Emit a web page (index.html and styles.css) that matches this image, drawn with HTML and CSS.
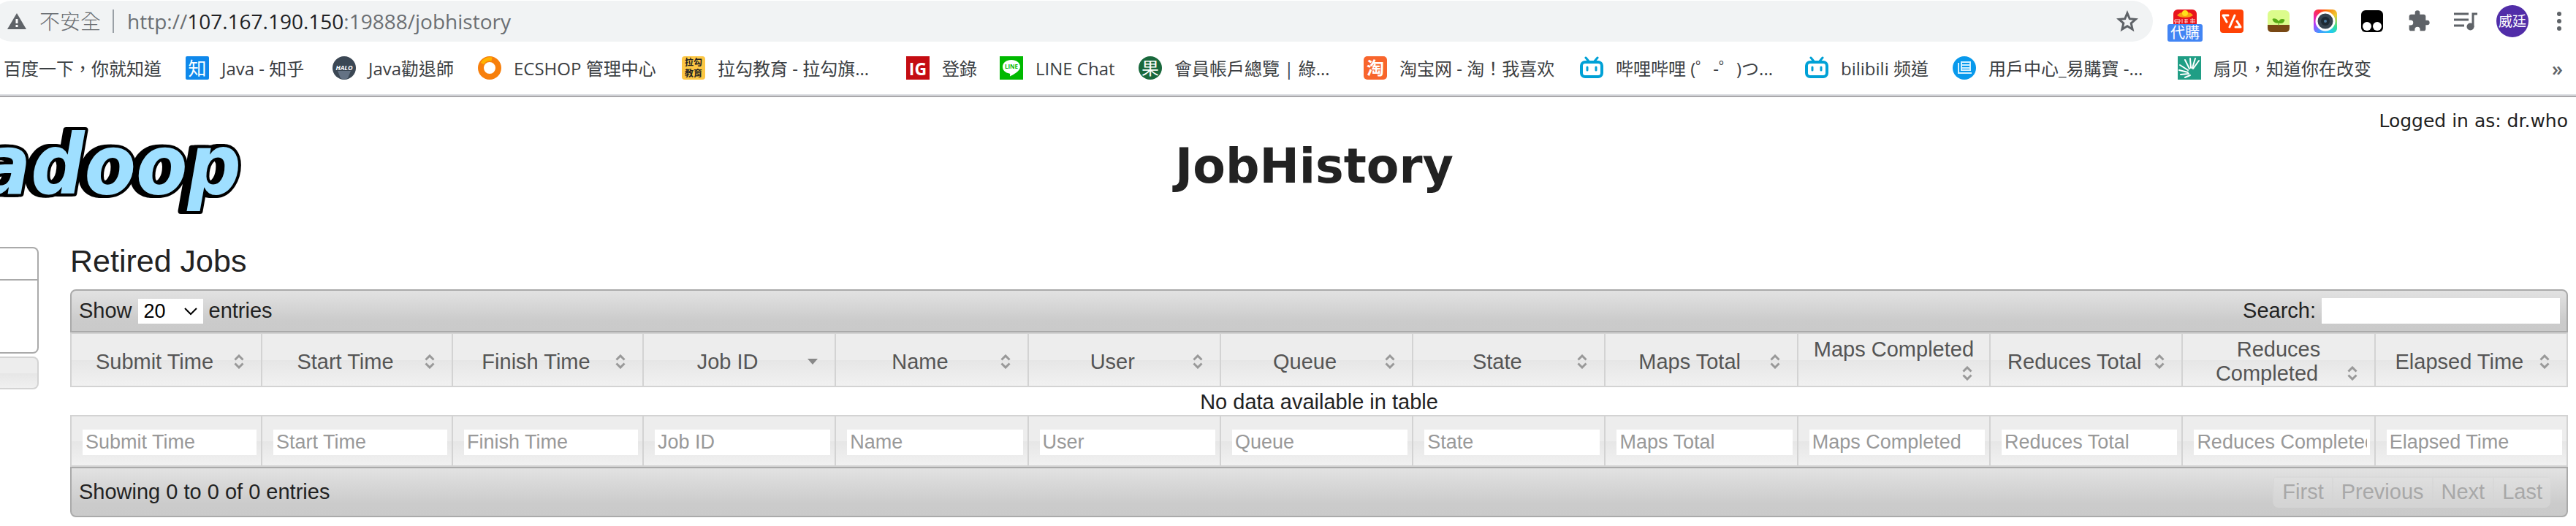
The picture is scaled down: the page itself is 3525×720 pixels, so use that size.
FILE: index.html
```html
<!DOCTYPE html>
<html lang="zh-Hant">
<head>
<meta charset="utf-8">
<title>JobHistory</title>
<link rel="stylesheet" href="styles.css">
</head>
<body>
<svg class="defs" aria-hidden="true">
  <symbol id="sort-both" viewBox="0 0 14 20"><path d="M1.500 7.500L7 2l5.500 5.500M1.500 12.500L7 18l5.500-5.500" fill="none" stroke="#999" stroke-width="3"/></symbol>
  <symbol id="sort-down" viewBox="0 0 14 20"><path d="M0 6h14L7 14z" fill="#888"/></symbol>
  <symbol id="bili" viewBox="0 0 32 32"><path d="M8 2l5 6M24 2l-5 6" stroke="#00a1d6" stroke-width="3" stroke-linecap="round"/><rect x="2" y="8" width="28" height="20" rx="5" fill="#fff" stroke="#00a1d6" stroke-width="4"/><path d="M10 15v4M22 15v4" stroke="#00a1d6" stroke-width="3" stroke-linecap="round"/></symbol>
</svg>

<header class="browser">
  <div class="toolbar">
    <div class="omnibox">
      <svg class="warn" viewBox="0 0 26 22"><path d="M13 0l13 22H0z" fill="#5f6368"/><path d="M13 8v6M13 16v3" stroke="#fff" stroke-width="3"/></svg>
      <span class="unsafe">不安全</span>
      <span class="sep"></span>
      <span class="url">http://<b>107.167.190.150</b>:19888/jobhistory</span>
      <button class="star" aria-label="Bookmark"><svg viewBox="0 0 30 30"><path d="M15 4l3.200 7.700 8.300.7-6.300 5.500 1.900 8.100-7.100-4.300L7.900 26l1.900-8.100-6.300-5.500 8.300-.7z" fill="none" stroke="#5f6368" stroke-width="3"/></svg></button>
    </div>
    <div class="extensions">
      <button class="ext gift" aria-label="代購">
        <svg viewBox="0 0 32 32"><rect width="32" height="32" rx="6" fill="#e8141c"/><path d="M5 8q4-4 7-4 4-4 8 0 4 0 7 4-4 3-11 3T5 8z" fill="#f8a012"/><circle cx="16" cy="5" r="4" fill="#ffe11a"/><path d="M2 14h7v3H2zM3 17v3M8 17v3M12 13v6M15 14h5M15 17h5M17 13v6M23 14h7M26 12v7M23 17h7" fill="none" stroke="#ffdcdc"/></svg>
        <span class="badge">代購</span>
      </button>
      <button class="ext" aria-label="Code"><svg viewBox="0 0 32 32"><rect width="32" height="32" rx="4" fill="#ff4206"/><path d="M11 8H4l5 9M20 8l-7 16M21 24h7l-5-8" fill="none" stroke="#fff" stroke-width="3" stroke-linejoin="round" stroke-linecap="round"/></svg></button>
      <button class="ext" aria-label="Plant"><svg viewBox="0 0 32 32"><rect x="1" y="1" width="30" height="30" rx="6" fill="#dcfc8c"/><path d="M1 21h30v4q0 6-6 6H7q-6 0-6-6z" fill="#784814"/><path d="M16 22v-6M16 18q-7 1-8-5 7-1 8 5q1-6 8-4-1 6-8 4" fill="#58ac14" stroke="#58ac14"/></svg></button>
      <button class="ext" aria-label="Camera"><span class="camera"><svg viewBox="0 0 32 32"><circle cx="16" cy="16" r="12" fill="#35434f" stroke="#fff" stroke-width="3"/><circle cx="16" cy="16" r="6" fill="#1d2933"/><circle cx="16" cy="16" r="2" fill="#4c7aa0"/></svg></span></button>
      <button class="ext" aria-label="Scripts"><svg viewBox="0 0 32 32"><rect x="1" y="1" width="30" height="30" rx="6" fill="#000"/><circle cx="9" cy="23" r="6" fill="#fff"/><circle cx="23" cy="23" r="6" fill="#fff"/></svg></button>
      <button class="ext" aria-label="Extensions"><svg viewBox="0 0 24 24"><path fill="#5f6368" d="M20.500 11H19V7c0-1.100-.9-2-2-2h-4V3.500a2.500 2.500 0 0 0-5 0V5H4c-1.100 0-2 .9-2 2v3.800h1.500a2.700 2.700 0 0 1 0 5.400H2V20c0 1.100.9 2 2 2h3.800v-1.500a2.700 2.700 0 0 1 5.400 0V22H17c1.100 0 2-.9 2-2v-4h1.500a2.500 2.500 0 0 0 0-5z"/></svg></button>
      <button class="ext" aria-label="Media"><svg viewBox="0 0 32 32"><path d="M0 6h20M0 14h20M0 22h14" stroke="#5f6368" stroke-width="3"/><path d="M32 6h-6v18" fill="none" stroke="#5f6368" stroke-width="3"/><circle cx="22.500" cy="23.500" r="5" fill="#5f6368"/></svg></button>
      <button class="avatar">威廷</button>
      <button class="ext dots" aria-label="Menu"><svg viewBox="0 0 32 32"><g fill="#5f6368"><circle cx="16" cy="6" r="3"/><circle cx="16" cy="16" r="3"/><circle cx="16" cy="26" r="3"/></g></svg></button>
    </div>
  </div>

  <nav class="bookmarks">
    <a href="#">百度一下，你就知道</a>
    <a href="#"><span class="fav zhihu">知</span>Java - 知乎</a>
    <a href="#"><svg class="fav" viewBox="0 0 32 32"><circle cx="16" cy="16" r="16" fill="#3b4754"/><path d="M7 20h18l-4 10q-5 3-10 0z" fill="#647284"/><text x="16" y="19" class="halo">HALO</text></svg>Java勸退師</a>
    <a href="#"><svg class="fav" viewBox="0 0 32 32"><circle cx="16" cy="16" r="12" fill="none" stroke="#f77f0c" stroke-width="8"/><path d="M6 10a12 12 0 0 1 13-6" fill="none" stroke="#ffb400" stroke-width="5"/></svg>ECSHOP 管理中心</a>
    <a href="#"><span class="fav lagou">拉勾教育</span>拉勾教育 - 拉勾旗...</a>
    <a href="#"><span class="fav ig">IG</span>登錄</a>
    <a href="#"><svg class="fav" viewBox="0 0 32 32"><rect width="32" height="32" fill="#00b900"/><path d="M16 5c-7 0-12 4-12 9.500 0 5 4 8 9 9 2 .5 1 2 1 4 4-2 14-7 14-13C28 9 23 5 16 5z" fill="#fff"/><text x="16" y="17" class="line">LINE</text></svg>LINE Chat</a>
    <a href="#"><span class="fav guo">果</span>會員帳戶總覽 | 綠...</a>
    <a href="#"><span class="fav tao">淘</span>淘宝网 - 淘！我喜欢</a>
    <a href="#"><svg class="fav"><use href="#bili"/></svg>哔哩哔哩 (゜-゜)つ...</a>
    <a href="#"><svg class="fav"><use href="#bili"/></svg>bilibili 频道</a>
    <a href="#"><svg class="fav" viewBox="0 0 32 32"><circle cx="16" cy="16" r="16" fill="#0899ec"/><path d="M12 8h12v11H12zM12 12h12M12 16h12M8 9v14h18" fill="none" stroke="#d4f0ff" stroke-width="2"/></svg>用戶中心_易購寶 -...</a>
    <a href="#"><svg class="fav" viewBox="0 0 32 32"><rect width="32" height="32" fill="#209e85"/><path d="M16 17L10 5M18 16L17 3M20 16l4-13M21 17l8-11M14 19L3 12M14 22L2 19M15 24L4 25M17 26l-7 3" stroke="#fff" stroke-width="2" stroke-linecap="round"/></svg>扇贝，知道你在改变</a>
    <button class="more" aria-label="More bookmarks">»</button>
  </nav>
</header>

<main class="page">
  <div class="login">Logged in as: dr.who</div>
  <div class="banner">
    <svg class="logo" viewBox="0 0 345 130" role="img" aria-label="hadoop">
      <text x="-27" y="96">adoop</text>
    </svg>
    <h1>JobHistory</h1>
  </div>

  <div class="columns">
    <aside class="side">
      <div class="side-panel"><div class="side-head"></div></div>
      <div class="side-tab"></div>
    </aside>

    <section class="content">
      <h2>Retired Jobs</h2>
      <div class="bar bar-top">
        <label>Show <select><option>20</option><option>40</option></select> entries</label>
        <label>Search: <input class="search" type="text"></label>
      </div>
      <table>
        <colgroup>
          <col class="col-first">
          <col class="col-time" span="2">
          <col span="10">
        </colgroup>
        <thead>
          <tr>
            <th>Submit Time<svg class="sort"><use href="#sort-both"/></svg></th>
            <th>Start Time<svg class="sort"><use href="#sort-both"/></svg></th>
            <th>Finish Time<svg class="sort"><use href="#sort-both"/></svg></th>
            <th aria-sort="descending">Job ID<svg class="sort"><use href="#sort-down"/></svg></th>
            <th>Name<svg class="sort"><use href="#sort-both"/></svg></th>
            <th>User<svg class="sort"><use href="#sort-both"/></svg></th>
            <th>Queue<svg class="sort"><use href="#sort-both"/></svg></th>
            <th>State<svg class="sort"><use href="#sort-both"/></svg></th>
            <th>Maps Total<svg class="sort"><use href="#sort-both"/></svg></th>
            <th>Maps Completed<svg class="sort"><use href="#sort-both"/></svg></th>
            <th>Reduces Total<svg class="sort"><use href="#sort-both"/></svg></th>
            <th>Reduces Completed<svg class="sort"><use href="#sort-both"/></svg></th>
            <th>Elapsed Time<svg class="sort"><use href="#sort-both"/></svg></th>
          </tr>
        </thead>
        <tbody>
          <tr><td colspan="13">No data available in table</td></tr>
        </tbody>
        <tfoot>
          <tr>
            <th><input type="text" placeholder="Submit Time" aria-label="Submit Time"></th>
            <th><input type="text" placeholder="Start Time" aria-label="Start Time"></th>
            <th><input type="text" placeholder="Finish Time" aria-label="Finish Time"></th>
            <th><input type="text" placeholder="Job ID" aria-label="Job ID"></th>
            <th><input type="text" placeholder="Name" aria-label="Name"></th>
            <th><input type="text" placeholder="User" aria-label="User"></th>
            <th><input type="text" placeholder="Queue" aria-label="Queue"></th>
            <th><input type="text" placeholder="State" aria-label="State"></th>
            <th><input type="text" placeholder="Maps Total" aria-label="Maps Total"></th>
            <th><input type="text" placeholder="Maps Completed" aria-label="Maps Completed"></th>
            <th><input type="text" placeholder="Reduces Total" aria-label="Reduces Total"></th>
            <th><input type="text" placeholder="Reduces Completed" aria-label="Reduces Completed"></th>
            <th><input type="text" placeholder="Elapsed Time" aria-label="Elapsed Time"></th>
          </tr>
        </tfoot>
      </table>
      <div class="bar bar-bottom">
        <span>Showing 0 to 0 of 0 entries</span>
        <div class="pager">
          <button disabled>First</button><button disabled>Previous</button><button disabled>Next</button><button disabled>Last</button>
        </div>
      </div>
    </section>
  </div>
</main>
</body>
</html>
```
FILE: styles.css
```css
* { box-sizing: border-box; }
body {
  margin: 0;
  background: #fff;
  color: #222;
  font-family: "Liberation Sans", "Noto Sans CJK TC", sans-serif;
  font-size: 29px;
  line-height: 33px;
  overflow-x: hidden;
}
button { border: 0; padding: 0; background: none; font: inherit; color: inherit; }
.defs { position: absolute; width: 0; height: 0; }

/* browser chrome */
.browser {
  font-family: "Open Sans", "Noto Sans CJK TC", sans-serif;
  border-bottom: 2px solid #a9a8ab;
  box-shadow: inset 0 -2px #dadce0;
  height: 133px;
}
.toolbar { display: flex; align-items: center; padding-top: 1px; }
.omnibox {
  flex: 1;
  display: flex;
  align-items: center;
  height: 56px;
  margin-left: -12px;
  padding: 0 20px 0 22px;
  border-radius: 28px;
  background: #f1f3f4;
  color: #6b6f73;
  font-size: 28px;
}
.warn { width: 26px; height: 22px; }
.unsafe { margin-left: 18px; font-weight: 300; }
.sep { width: 2px; height: 32px; margin: 0 18px 0 16px; background: #9aa0a6; }
.url b { font-weight: 400; color: #202124; }
.star { margin-left: auto; width: 30px; height: 30px; }
.star svg, .ext svg { display: block; width: 100%; height: 100%; }
.extensions { display: flex; align-items: center; gap: 32px; padding: 0 7px 0 28px; }
.ext { position: relative; width: 32px; height: 32px; }
.badge {
  position: absolute;
  left: -8px;
  top: 20px;
  width: 48px;
  height: 24px;
  border-radius: 3px;
  background: #4285f4;
  color: #fff;
  font-size: 20px;
  line-height: 24px;
}
.camera {
  display: block;
  height: 32px;
  border-radius: 6px;
  background: conic-gradient(#f60, #ec3 60deg, #3d9 120deg, #2ce 150deg, #49f 210deg, #a4f 250deg, #e2a 290deg, #f33 330deg, #f60);
}
.avatar {
  width: 44px;
  height: 44px;
  margin: 0 -6px;
  border-radius: 50%;
  background: #512da8;
  color: #fff;
  font-size: 19px;
}
.bookmarks {
  display: grid;
  grid-template-columns: 249px 201px 199px 279px 307px 128px 190px 308px 296px 308px 202px 308px 1fr auto;
  align-items: center;
  height: 72px;
  padding: 0 18px 0 5px;
  color: #3c4043;
  font-size: 24px;
}
.bookmarks a {
  display: flex;
  align-items: center;
  gap: 17px;
  color: inherit;
  text-decoration: none;
  white-space: nowrap;
}
.fav { flex: none; width: 32px; height: 32px; color: #fff; text-align: center; line-height: 32px; }
.zhihu { border-radius: 2px; background: #0f88eb; font-size: 25px; }
.lagou { border-radius: 4px; background: #fcc644; color: #222; font-size: 12px; font-weight: 700; line-height: 15px; padding: 1px 3px; white-space: normal; }
.ig { background: #c40c12; font-size: 23px; font-weight: 700; line-height: 34px; }
.guo { border-radius: 50%; background: #19683c; font-size: 24px; }
.tao { border-radius: 5px; background: #f8652c; font-size: 24px; font-weight: 700; }
.halo, .line { text-anchor: middle; font: italic 700 9px "Open Sans", sans-serif; fill: #fff; }
.line { font-style: normal; font-size: 8px; fill: #00b900; }
.more { font-size: 27px; font-weight: 600; color: #5f6368; }

/* page header */
.login {
  padding: 16px 11px 0 0;
  text-align: right;
  font: 25px/34px "DejaVu Sans", sans-serif;
}
.banner {
  display: grid;
  grid-template-columns: 345px 1fr;
  height: 138px;
}
.logo { width: 345px; height: 130px; margin-top: -14px; }
.logo text {
  font: italic 700 114px "DejaVu Sans Condensed", "Liberation Sans", sans-serif;
  fill: #9fdfff;
  stroke: #000;
  stroke-width: 8px;
  stroke-linejoin: round;
  paint-order: stroke;
  filter: drop-shadow(-4px 0 #000) drop-shadow(-4px 0 #000);
}
h1 {
  margin: 0;
  padding-right: 273px;
  text-align: center;
  font: 700 65px/90px "DejaVu Sans", sans-serif;
}

/* page body */
.columns { display: grid; grid-template-columns: 53px 1fr; column-gap: 43px; padding-right: 11px; }
.side { padding-top: 17px; }
.side-panel { height: 146px; border: 2px solid #aaa; border-left: 0; border-radius: 0 8px 8px 0; }
.side-head { height: 44px; border-bottom: 2px solid #aaa; }
.side-tab {
  height: 45px;
  margin-top: 4px;
  border: 2px solid #d3d3d3;
  border-left: 0;
  border-radius: 0 8px 8px 0;
  background: linear-gradient(#ededed 50%, #e6e6e6 50%, #f0f0f0);
}
h2 { margin: 0; padding: 12px 0 15px; font-size: 43px; font-weight: 400; line-height: 48px; }
.bar {
  display: flex;
  align-items: center;
  justify-content: space-between;
  border: 2px solid #aaa;
  background: linear-gradient(#e2e2e2, #cbcbcb 75%, #cacaca);
}
.bar-top { padding: 10px 9px 10px 10px; border-radius: 8px 8px 0 0; }
.bar-bottom { padding: 11px 22px 11px 10px; border-radius: 0 0 8px 8px; }
.bar label { display: flex; align-items: center; gap: 8px; }
select {
  appearance: none;
  width: 89px;
  height: 34px;
  padding: 0 8px;
  border: 0;
  border-radius: 0;
  color: #000;
  font: 27px "Liberation Sans", sans-serif;
  background: #fff url("data:image/svg+xml,%3Csvg xmlns='http://www.w3.org/2000/svg' width='18' height='12'%3E%3Cpath d='M1 2l8 8 8-8' fill='none' stroke='%23000' stroke-width='2'/%3E%3C/svg%3E") no-repeat right 8px center;
}
input {
  display: block;
  width: 100%;
  height: 35px;
  padding: 0 4px;
  border: 0;
  background: #fff;
  font: 27px "Liberation Sans", sans-serif;
}
input::placeholder { color: #999; opacity: 1; }
.search { width: 326px; }

table { width: 100%; table-layout: fixed; border-collapse: separate; border-spacing: 0; }
.col-first { width: 263px; }
.col-time { width: 261px; }
th {
  border: 2px solid #d3d3d3;
  border-left: 0;
  background: linear-gradient(#ededed 50%, #e6e6e6 50%, #f1f1f1);
  color: #555;
  font-weight: 400;
}
th:first-child { border-left: 2px solid #d3d3d3; }
thead th { padding: 5px 14px 0; }
tfoot th { padding: 18px 6px 14px 15px; }
td { padding: 4px 0 1px; text-align: center; }
.sort { float: right; width: 32px; height: 20px; margin: 6px 0 7px; }

.pager { display: flex; border-radius: 8px; overflow: hidden; }
.pager button {
  height: 43px;
  padding: 0 11px;
  border: 2px solid rgba(211, 211, 211, .5);
  border-right: 0;
  background: rgba(230, 230, 230, .35);
  color: #a8a8a8;
}
```
